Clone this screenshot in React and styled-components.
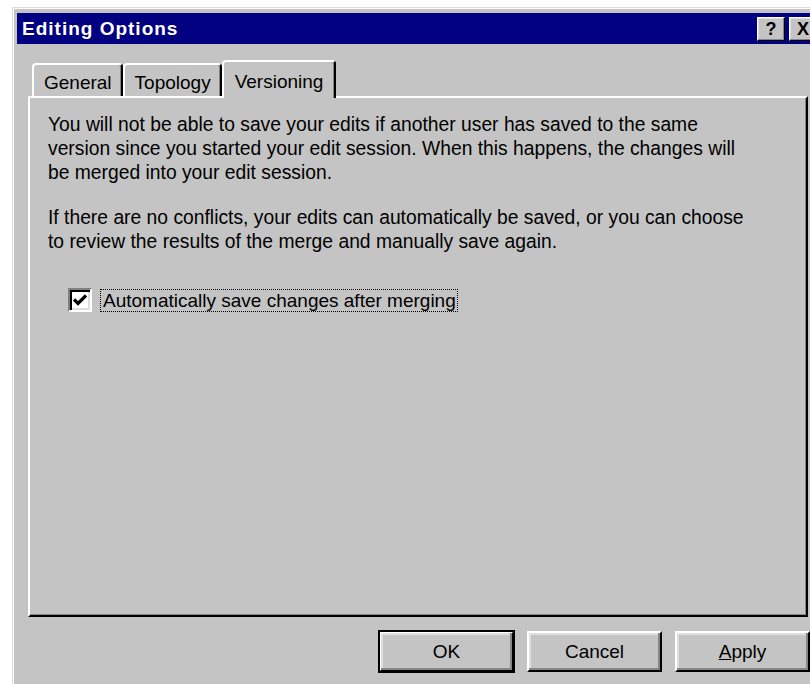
import React from 'react';
import styled, { createGlobalStyle, css } from 'styled-components';

const GlobalStyle = createGlobalStyle`
  html, body {
    margin: 0;
    background: #fff;
    overflow: hidden;
  }
  body {
    font-family: "Liberation Sans", Arial, sans-serif;
    font-size: 19px;
    color: #000;
  }
`;

// classic 3D edges
const raised = css`
  border: 2px solid;
  border-color: #fff #000 #000 #fff;
  box-shadow: inset -2px -2px 0 #868686, inset 2px 2px 0 #dfdfdf;
`;

const Window = styled.div`
  box-sizing: border-box;
  margin: 7px 0 0 12px;
  width: 812px;
  height: 700px;
  background: #c4c4c4;
  border: 1px solid;
  border-color: #dcdcdc #000 #000 #dcdcdc;
  box-shadow: inset 1px 1px 0 #fff;
  padding: 5px 4px 4px 4px;
`;

const TitleBar = styled.div`
  height: 31px;
  background: #000080;
  display: flex;
  align-items: center;
  padding: 0 2px 0 5px;
`;

const Caption = styled.div`
  flex: 1;
  color: #fff;
  font-weight: bold;
  font-size: 19px;
  letter-spacing: 1px;
`;

const CaptionButton = styled.button`
  box-sizing: border-box;
  width: 28px;
  height: 24px;
  margin-left: 4px;
  padding: 0;
  background: #c4c4c4;
  ${raised}
  border-width: 1px;
  box-shadow: inset -1px -1px 0 #868686, inset 1px 1px 0 #dfdfdf;
  font-family: "Liberation Sans", Arial, sans-serif;
  font-weight: bold;
  font-size: 18px;
  line-height: 20px;
  color: #000;
`;

const Body = styled.div`
  padding: 16px 11px 0;
`;

const TabStrip = styled.div`
  display: flex;
  align-items: flex-end;
  padding-left: 4px;
  position: relative;
  z-index: 1;
`;

const Tab = styled.div`
  box-sizing: border-box;
  height: ${p => (p.$active ? '38px' : '33px')};
  margin-bottom: ${p => (p.$active ? '-2px' : '0')};
  padding: ${p => (p.$active ? '9px 11px 0 11px' : '7px 9px 0 10px')};
  background: #c4c4c4;
  border-top: 2px solid #fff;
  border-left: 2px solid #fff;
  border-right: 2px solid #000;
  border-top-left-radius: 4px;
  border-top-right-radius: 4px;
  box-shadow: inset -1px 0 0 #868686;
  white-space: nowrap;
`;

const Panel = styled.div`
  box-sizing: border-box;
  height: 521px;
  background: #c4c4c4;
  border: 2px solid;
  border-color: #fff #000 #000 #fff;
  box-shadow: inset -1px -1px 0 #868686;
  padding: 15px 18px 0;
  font-size: 19.3px;
  line-height: 24px;
`;

const Para = styled.p`
  margin: 0 0 21px;
`;

const CheckRow = styled.label`
  display: flex;
  align-items: center;
  margin: 34px 0 0 20px;
  font-size: 19px;
`;

const CheckBox = styled.span`
  box-sizing: border-box;
  width: 24px;
  height: 24px;
  background: #fff;
  border: 2px solid;
  border-color: #808080 #fff #fff #808080;
  box-shadow: inset 2px 2px 0 #000, inset -2px -2px 0 #dfdfdf;
  display: flex;
  align-items: center;
  justify-content: center;
`;

const FocusLabel = styled.span`
  margin-left: 8px;
  padding: 0 1px 0 2px;
  border: 1px dotted #000;
  line-height: 21px;
`;

const ButtonRow = styled.div`
  display: flex;
  justify-content: flex-end;
  gap: 13px;
  margin: 14px -2px 0 0;
`;

const Button = styled.button`
  box-sizing: border-box;
  width: 135px;
  height: 41px;
  padding: 0;
  background: #c4c4c4;
  font-family: "Liberation Sans", Arial, sans-serif;
  font-size: 19px;
  color: #000;
  ${raised}
  ${p =>
    p.$default &&
    css`
      outline: 2px solid #000;
      outline-offset: -1px;
    `}
`;

const Check = () => (
  <svg width="14" height="12" viewBox="0 0 14 12">
    <path d="M1 5.5 L5 9.5 L13 1.5" fill="none" stroke="#000" strokeWidth="3.2" />
  </svg>
);

export default function App() {
  return (
    <>
      <GlobalStyle />
      <Window>
        <TitleBar>
          <Caption>Editing Options</Caption>
          <CaptionButton>?</CaptionButton>
          <CaptionButton>X</CaptionButton>
        </TitleBar>
        <Body>
          <TabStrip>
            <Tab>General</Tab>
            <Tab>Topology</Tab>
            <Tab $active>Versioning</Tab>
          </TabStrip>
          <Panel>
            <Para>
              You will not be able to save your edits if another user has saved to the same
              <br />
              version since you started your edit session. When this happens, the changes will
              <br />
              be merged into your edit session.
            </Para>
            <Para>
              If there are no conflicts, your edits can automatically be saved, or you can choose
              <br />
              to review the results of the merge and manually save again.
            </Para>
            <CheckRow>
              <CheckBox>
                <Check />
              </CheckBox>
              <FocusLabel>Automatically save changes after merging</FocusLabel>
            </CheckRow>
          </Panel>
          <ButtonRow>
            <Button $default>OK</Button>
            <Button>Cancel</Button>
            <Button>
              <u>A</u>pply
            </Button>
          </ButtonRow>
        </Body>
      </Window>
    </>
  );
}
